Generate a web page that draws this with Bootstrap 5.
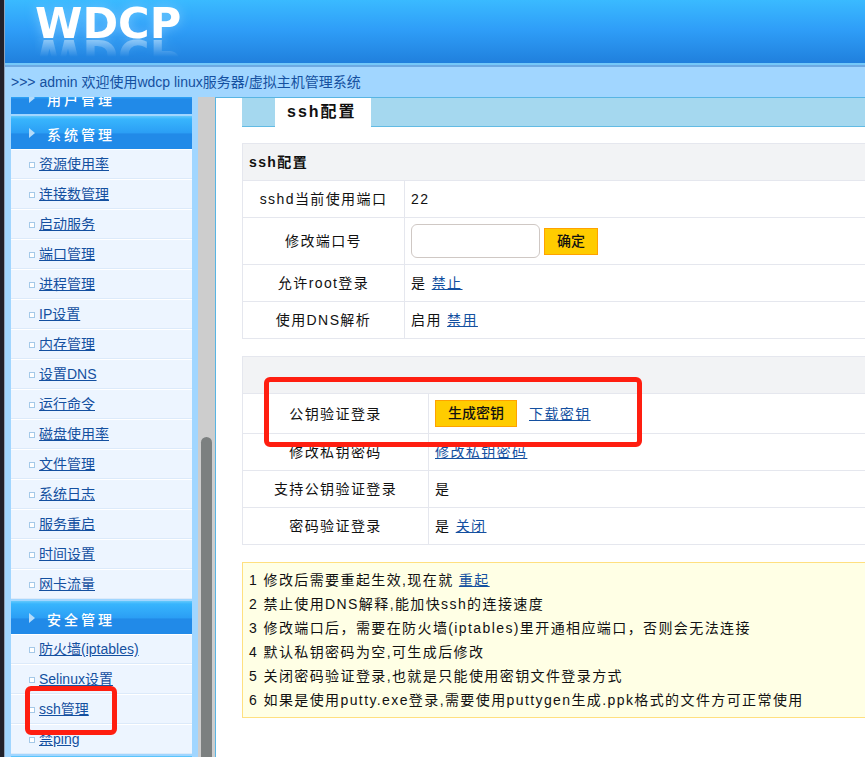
<!DOCTYPE html>
<html lang="zh-CN">
<head>
<meta charset="utf-8">
<meta name="viewport" content="width=device-width, initial-scale=1">
<title>WDCP</title>
<link href="https://cdn.jsdelivr.net/npm/bootstrap@5.3.0/dist/css/bootstrap.min.css" rel="stylesheet">
<style>
body{font-family:"Liberation Sans","Noto Sans CJK SC",sans-serif;font-size:14px;line-height:24px;color:#111;background:#a1d6ff;border-left:4px solid #21212b}
a{color:#1450a0;text-decoration:underline}
.page-shell{border-left:1px solid #8fa3bb}
.brand-bar{height:67px;background:linear-gradient(#3abaff,#2f9ef8 45%,#1f7edb);border-bottom:2px solid #6da9e2;box-shadow:inset 0 -2px #74c8f9;padding:2px 0 0 30px}
.brand-name{font-family:"DejaVu Sans",sans-serif;font-weight:700;font-size:43px;line-height:42px;height:38px;color:#fff;font-kerning:none;text-shadow:0 0 12px rgba(150,215,255,.6);-webkit-box-reflect:below -2px linear-gradient(transparent 50%,rgba(255,255,255,.5))}
.welcome{height:30px;color:#1450a0;padding-left:6px;line-height:31px}
.side{width:193px;padding:0 6px;background:#a1d6ff}
.side-head{height:33px;margin-top:2px;padding:5px 0 0 18px;color:#fff;letter-spacing:3px;background:linear-gradient(#63c8fb 0,#38b5fd 3px,#2b9ff5 50%,#218ae8 55%,#218ae8);font-weight:500}
.side-head:first-child{margin-top:-16px}
.side-head svg{width:6px;height:10px;margin-right:12px;margin-bottom:4px;flex:none}
.side-item{height:30px;padding-left:18px;background:#edf5ff;border-top:1px solid #fff;border-bottom:1px solid #dceafa}
.side-item::before{content:"";width:6px;height:6px;border:1px solid #a5c9e8;background:#fff;margin-right:4px;margin-top:2px}
.track{width:17px;background:#cdcdcd;padding:0 3px}
.track-space{flex:340}
.track-thumb{flex:320;background:#7c8080;border-radius:6px 6px 0 0}
.pane{background:#fff;border-left:1px solid #58b5e3;border-top:1px solid #58b5e3;padding-left:26px;letter-spacing:.1em}
.tab-strip{height:29px;background:#a5d8ef;border-bottom:1px solid #62bbe4;padding-left:33px;margin-bottom:16px}
.tab-on{height:29px;background:#fff;padding:0 14px 0 12px;font-size:16px;font-weight:700;letter-spacing:2px;line-height:27px}
.cfg{width:100%;margin:0 0 17px;border-collapse:collapse}
.cfg td,.cfg th{border:1px solid #e5e7ee;border-right:0;height:37px;padding:0 6px}
.cfg thead th{background:#f2f3f5;font-weight:700;text-align:left}
.cfg tbody th{font-weight:400;text-align:center}
.col-a{width:162px}
.col-b{width:186px}
.cfg .row-port td{height:47px}
.cfg .row-key td{height:40px}
.port-input{width:129px;height:34px;border:1px solid #cfc8c4;border-radius:6px;background:#fff}
.gold{height:27px;border:1px solid #ffa200;background:#fc0;color:#111;padding:0 12px;line-height:25px;font-weight:500}
.notes{background:#ffffe5;border:1px solid #ffe080;border-right:0;padding:5px 6px}
.marker{position:absolute;border:5px solid #ff1e10;border-radius:6px;pointer-events:none}
.marker-key{left:22px;top:21px;width:378px;height:70px}
.marker-ssh{left:14px;top:-9px;width:92px;height:49px}
</style>
<script src="https://cdn.jsdelivr.net/npm/bootstrap@5.3.0/dist/js/bootstrap.bundle.min.js"></script>
</head>
<body>
<div class="page-shell d-flex flex-column vh-100 overflow-hidden">
<header class="brand-bar flex-shrink-0 d-flex align-items-start">
<h1 class="brand-name m-0">WDCP</h1>
</header>
<div class="welcome flex-shrink-0 text-nowrap">&gt;&gt;&gt; admin 欢迎使用wdcp linux服务器/虚拟主机管理系统</div>
<div class="d-flex flex-grow-1 overflow-hidden">
<nav class="side flex-shrink-0 overflow-hidden" aria-label="菜单">
<div class="side-head d-flex align-items-center"><svg viewBox="0 0 6 10"><path d="M0 0 6 5 0 10z" fill="#b5dcfa"/></svg>用户管理</div>
<div class="side-head d-flex align-items-center"><svg viewBox="0 0 6 10"><path d="M0 0 6 5 0 10z" fill="#b5dcfa"/></svg>系统管理</div>
<div class="side-item d-flex align-items-center"><a href="#">资源使用率</a></div>
<div class="side-item d-flex align-items-center"><a href="#">连接数管理</a></div>
<div class="side-item d-flex align-items-center"><a href="#">启动服务</a></div>
<div class="side-item d-flex align-items-center"><a href="#">端口管理</a></div>
<div class="side-item d-flex align-items-center"><a href="#">进程管理</a></div>
<div class="side-item d-flex align-items-center"><a href="#">IP设置</a></div>
<div class="side-item d-flex align-items-center"><a href="#">内存管理</a></div>
<div class="side-item d-flex align-items-center"><a href="#">设置DNS</a></div>
<div class="side-item d-flex align-items-center"><a href="#">运行命令</a></div>
<div class="side-item d-flex align-items-center"><a href="#">磁盘使用率</a></div>
<div class="side-item d-flex align-items-center"><a href="#">文件管理</a></div>
<div class="side-item d-flex align-items-center"><a href="#">系统日志</a></div>
<div class="side-item d-flex align-items-center"><a href="#">服务重启</a></div>
<div class="side-item d-flex align-items-center"><a href="#">时间设置</a></div>
<div class="side-item d-flex align-items-center"><a href="#">网卡流量</a></div>
<div class="side-head d-flex align-items-center"><svg viewBox="0 0 6 10"><path d="M0 0 6 5 0 10z" fill="#b5dcfa"/></svg>安全管理</div>
<div class="side-item d-flex align-items-center"><a href="#">防火墙(iptables)</a></div>
<div class="side-item d-flex align-items-center"><a href="#">Selinux设置</a></div>
<div class="side-item d-flex align-items-center position-relative"><a href="#">ssh管理</a><span class="marker marker-ssh z-1"></span></div>
<div class="side-item d-flex align-items-center"><a href="#">禁ping</a></div>
<div class="side-head"></div>
</nav>
<div class="track d-flex flex-column flex-shrink-0" aria-hidden="true"><div class="track-space"></div><div class="track-thumb"></div></div>
<main class="pane flex-grow-1 overflow-hidden">
<div class="tab-strip d-flex"><div class="tab-on">ssh配置</div></div>
<form>
<table class="cfg">
<colgroup><col class="col-a"><col></colgroup>
<thead><tr><th colspan="2">ssh配置</th></tr></thead>
<tbody>
<tr><th scope="row">sshd当前使用端口</th><td>22</td></tr>
<tr class="row-port"><th scope="row"><label for="port">修改端口号</label></th><td><div class="d-flex align-items-center"><input class="port-input" id="port" type="text"><button class="gold ms-1" type="button">确定</button></div></td></tr>
<tr><th scope="row">允许root登录</th><td>是 <a href="#">禁止</a></td></tr>
<tr><th scope="row">使用DNS解析</th><td>启用 <a href="#">禁用</a></td></tr>
</tbody>
</table>
<div class="position-relative">
<table class="cfg">
<colgroup><col class="col-b"><col></colgroup>
<thead><tr><th colspan="2"></th></tr></thead>
<tbody>
<tr class="row-key"><th scope="row">公钥验证登录</th><td><div class="d-flex align-items-center"><button class="gold" type="button">生成密钥</button><a class="ms-2 ps-1" href="#">下载密钥</a></div></td></tr>
<tr><th scope="row">修改私钥密码</th><td><a href="#">修改私钥密码</a></td></tr>
<tr><th scope="row">支持公钥验证登录</th><td>是</td></tr>
<tr><th scope="row">密码验证登录</th><td>是 <a href="#">关闭</a></td></tr>
</tbody>
</table>
<span class="marker marker-key"></span>
</div>
</form>
<div class="notes text-nowrap">
<div>1 修改后需要重起生效,现在就 <a href="#">重起</a></div>
<div>2 禁止使用DNS解释,能加快ssh的连接速度</div>
<div>3 修改端口后，需要在防火墙(iptables)里开通相应端口，否则会无法连接</div>
<div>4 默认私钥密码为空,可生成后修改</div>
<div>5 关闭密码验证登录,也就是只能使用密钥文件登录方式</div>
<div>6 如果是使用putty.exe登录,需要使用puttygen生成.ppk格式的文件方可正常使用</div>
</div>
</main>
</div>
</div>
</body>
</html>
